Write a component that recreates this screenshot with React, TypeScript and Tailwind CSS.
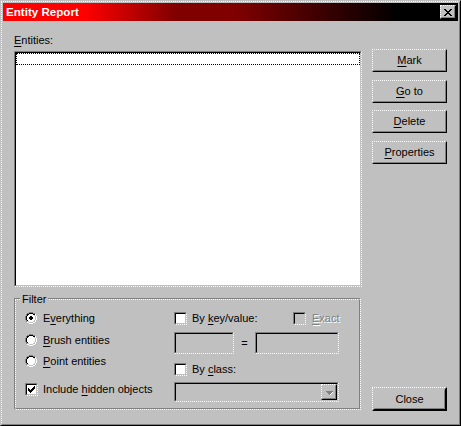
import React from 'react';

type Kids = { className?: string; inner?: string; children?: React.ReactNode };

function Sunken({ className = '', inner = '', children }: Kids) {
  return (
    <div
      className={`[border-width:1px] [border-style:solid_dotted_dotted_solid] border-t-[#808080] border-l-[#808080] border-r-white border-b-white ${className}`}
    >
      <div
        className={`h-full w-full [border-width:1px] [border-style:solid] border-t-black border-l-black border-r-[#c0c0c0] border-b-[#c0c0c0] ${inner}`}
      >
        {children}
      </div>
    </div>
  );
}

function Raised({ className = '', inner = '', children }: Kids) {
  return (
    <div
      className={`bg-[#c0c0c0] [border-width:1px] [border-style:dotted_solid_solid_dotted] border-t-white border-l-white border-r-black border-b-black ${className}`}
    >
      <div
        className={`h-full w-full [border-width:1px] [border-style:solid] border-t-[#c0c0c0] border-l-[#c0c0c0] border-r-[#808080] border-b-[#808080] ${inner}`}
      >
        {children}
      </div>
    </div>
  );
}

function Bitmap({ rows, colors }: { rows: string[]; colors: Record<string, string> }) {
  const w = rows[0].length;
  const h = rows.length;
  const rects: React.ReactNode[] = [];
  rows.forEach((r, y) =>
    r.split('').forEach((c, x) => {
      if (colors[c]) rects.push(<rect key={`${x}-${y}`} x={x} y={y} width={1} height={1} fill={colors[c]} />);
    })
  );
  return (
    <svg width={w} height={h} viewBox={`0 0 ${w} ${h}`} shapeRendering="crispEdges" className="block shrink-0">
      {rects}
    </svg>
  );
}

const X_ROWS = ['##....##', '.##..##.', '..####..', '...##...', '..####..', '.##..##.', '##....##'];

const RADIO_ROWS = [
  '....GGGG....',
  '..GGKKKKGG..',
  '.GKKwwwwKKW.',
  '.GKwwwwwwLW.',
  'GKwwwwwwwwLW',
  'GKwwwwwwwwLW',
  'GKwwwwwwwwLW',
  'GKwwwwwwwwLW',
  '.GKwwwwwwLW.',
  '.GLLwwwwLLW.',
  '..WWLLLLWW..',
  '....WWWW....',
];

const RADIO_ON_ROWS = [
  '....GGGG....',
  '..GGKKKKGG..',
  '.GKKwwwwKKW.',
  '.GKwwwwwwLW.',
  'GKwwwDDwwwLW',
  'GKwwDDDDwwLW',
  'GKwwDDDDwwLW',
  'GKwwwDDwwwLW',
  '.GKwwwwwwLW.',
  '.GLLwwwwLLW.',
  '..WWLLLLWW..',
  '....WWWW....',
];

const RADIO_COLORS = { G: '#808080', K: '#000000', w: '#ffffff', W: '#ffffff', L: '#c0c0c0', D: '#000000' };

const CHECK_ROWS = ['......#', '.....##', '#...###', '##.###.', '#####..', '.###...', '..#....'];

const ARROW_ROWS = ['#######.', '.#####W.', '..###W..', '...#W...'];

function Radio({ on }: { on?: boolean }) {
  return <Bitmap rows={on ? RADIO_ON_ROWS : RADIO_ROWS} colors={RADIO_COLORS} />;
}

function Check({ checked, disabled }: { checked?: boolean; disabled?: boolean }) {
  return (
    <Sunken
      className="h-[13px] w-[13px] shrink-0"
      inner={`${disabled ? 'bg-[#c0c0c0]' : 'bg-white'} pl-[1px] pt-[1px]`}
    >
      {checked ? <Bitmap rows={CHECK_ROWS} colors={{ '#': '#000000' }} /> : null}
    </Sunken>
  );
}

function U({ children }: { children: React.ReactNode }) {
  return <span className="underline underline-offset-[2px] decoration-[1px]">{children}</span>;
}

function Btn({ children, className = '' }: { children: React.ReactNode; className?: string }) {
  return (
    <Raised className={`h-[23px] w-[75px] ${className}`} inner="flex items-center justify-center">
      <span className="leading-[13px]">{children}</span>
    </Raised>
  );
}

export default function App() {
  return (
    <div className="font-['Liberation_Sans',Arial,sans-serif] text-[11px] leading-[13px] text-black">
      <div className="h-[426px] w-[461px] bg-[#c0c0c0] [border-width:1px] [border-style:solid] border-t-[#c0c0c0] border-l-[#c0c0c0] border-r-black border-b-black">
        <div className="flex h-full w-full flex-col p-[1px] [border-width:1px] [border-style:dotted_solid_solid_dotted] border-t-white border-l-white border-r-[#808080] border-b-[#808080]">
          {/* Title bar */}
          <div className="flex h-[18px] shrink-0 items-center justify-between bg-[linear-gradient(90deg,#ff0000_18%,#800000_38%,#800000_51%,#000000_87%)] pl-[3px] pr-[2px]">
            <span className="text-[11.6px] font-bold leading-[14px] text-white">Entity Report</span>
            <Raised className="h-[14px] w-[16px]" inner="pl-[2px] pt-[2px]">
              <Bitmap rows={X_ROWS} colors={{ '#': '#000000' }} />
            </Raised>
          </div>

          {/* Body */}
          <div className="flex flex-1">
            {/* Left column */}
            <div className="ml-[11px] flex w-[348px] flex-col pt-[13px]">
              <div className="h-[13px]">
                <U>E</U>ntities:
              </div>
              <Sunken className="mt-[4px] h-[236px] w-[348px]" inner="bg-white">
                <div className="h-[12px] w-full [border-width:1px] border-dotted border-black" />
              </Sunken>

              {/* Filter group */}
              <div className="relative mt-[11px] h-[112px] w-[347px] [border-width:1px] [border-style:solid_dotted_dotted_solid] border-t-[#808080] border-l-[#808080] border-r-white border-b-white">
                <div className="flex h-full w-full [border-width:1px] [border-style:dotted_solid_solid_dotted] border-t-white border-l-white border-r-[#808080] border-b-[#808080]">
                  {/* radios */}
                  <div className="flex w-[158px] flex-col pl-[9px] pt-[10px]">
                    <div className="flex h-[16px] items-center gap-[6px]">
                      <Radio on />
                      <span>
                        E<U>v</U>erything
                      </span>
                    </div>
                    <div className="mt-[6px] flex h-[16px] items-center gap-[6px]">
                      <Radio />
                      <span>
                        <U>B</U>rush entities
                      </span>
                    </div>
                    <div className="mt-[5px] flex h-[16px] items-center gap-[6px]">
                      <Radio />
                      <span>
                        <U>P</U>oint entities
                      </span>
                    </div>
                    <div className="mt-[12px] flex h-[16px] items-center gap-[5px]">
                      <Check checked />
                      <span>
                        Include <U>h</U>idden objects
                      </span>
                    </div>
                  </div>

                  {/* key/value & class */}
                  <div className="flex flex-col pt-[10px]">
                    <div className="flex h-[16px] items-center">
                      <Check />
                      <span className="ml-[5px] w-[101px]">
                        By <U>k</U>ey/value:
                      </span>
                      <Check disabled />
                      <span className="ml-[6px] text-[#808080] [text-shadow:1px_1px_0_#ffffff]">
                        <U>E</U>xact
                      </span>
                    </div>
                    <div className="mt-[6px] flex h-[22px] items-center">
                      <Sunken className="h-[22px] w-[60px]" inner="bg-[#c0c0c0]" />
                      <span className="w-[21px] text-center">=</span>
                      <Sunken className="h-[22px] w-[84px]" inner="bg-[#c0c0c0]" />
                    </div>
                    <div className="mt-[7px] flex h-[16px] items-center">
                      <Check />
                      <span className="ml-[5px]">
                        By <U>c</U>lass:
                      </span>
                    </div>
                    <Sunken className="mt-[5px] h-[20px] w-[165px]" inner="bg-[#c0c0c0] flex justify-end">
                      <Raised className="h-[16px] w-[16px]" inner="flex items-center justify-center pl-[1px] pt-[1px]">
                        <Bitmap rows={ARROW_ROWS} colors={{ '#': '#808080', W: '#ffffff' }} />
                      </Raised>
                    </Sunken>
                  </div>
                </div>
                <span className="absolute left-[5px] top-[-6px] bg-[#c0c0c0] px-[2px] leading-[13px]">Filter</span>
              </div>
            </div>

            {/* Right column */}
            <div className="ml-[10px] flex w-[75px] flex-col pb-[12px] pt-[28px]">
              <Btn>
                <U>M</U>ark
              </Btn>
              <Btn className="mt-[8px]">
                <U>G</U>o to
              </Btn>
              <Btn className="mt-[7px]">
                <U>D</U>elete
              </Btn>
              <Btn className="mt-[8px]">
                <U>P</U>roperties
              </Btn>
              <div className="mt-auto h-[24px] w-[75px] [border-width:1px] [border-style:dotted_solid_solid_dotted] border-t-white border-l-white border-r-black border-b-black">
                <div className="h-full w-full [border-width:1px] [border-style:solid] border-t-[#c0c0c0] border-l-[#c0c0c0] border-r-black border-b-black">
                  <div className="flex h-full w-full items-center justify-center [border-width:1px] [border-style:solid] border-t-[#c0c0c0] border-l-[#c0c0c0] border-r-[#808080] border-b-[#808080]">
                    <span>Close</span>
                  </div>
                </div>
              </div>
            </div>
          </div>
        </div>
      </div>
    </div>
  );
}
